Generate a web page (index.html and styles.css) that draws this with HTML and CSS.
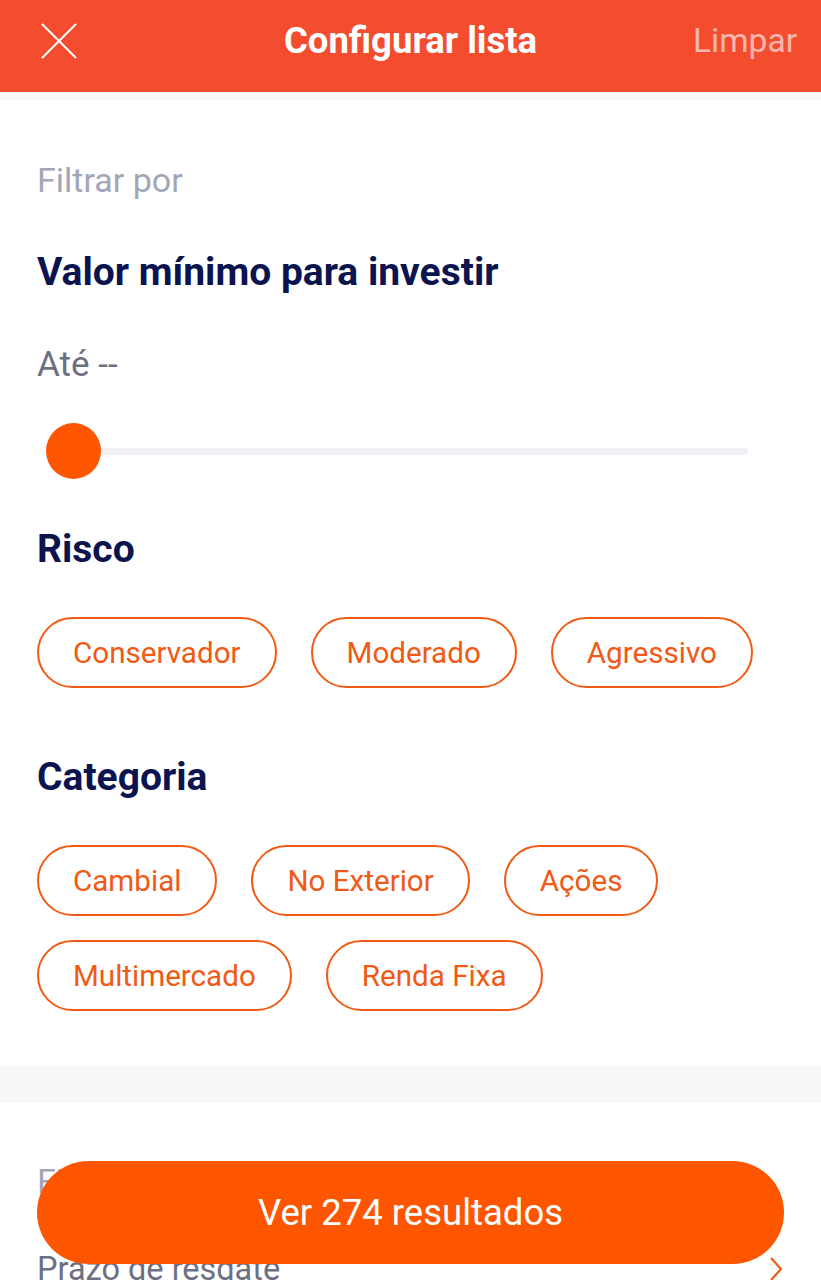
FILE: index.html
```html
<!DOCTYPE html>
<html lang="pt-BR">
<head>
<meta charset="utf-8">
<title>Configurar lista</title>
<link rel="stylesheet" href="styles.css">
</head>
<body>
<header class="topbar">
  <button class="close" aria-label="Fechar">
    <svg width="36" height="36" viewBox="0 0 36 36"><path d="M1 1 L35 35 M35 1 L1 35" stroke="#fff" stroke-width="2" fill="none"/></svg>
  </button>
  <h1 class="title">Configurar lista</h1>
  <span class="clear">Limpar</span>
</header>
<div class="strip"></div>
<main class="content">
  <section class="section">
    <p class="label">Filtrar por</p>
    <h2 class="heading heading-first">Valor mínimo para investir</h2>
    <p class="value">Até --</p>
    <div class="slider">
      <div class="track"></div>
      <div class="thumb"></div>
    </div>
    <h2 class="heading heading-risk">Risco</h2>
    <div class="chips">
      <span class="chip">Conservador</span>
      <span class="chip">Moderado</span>
      <span class="chip">Agressivo</span>
    </div>
    <h2 class="heading heading-cat">Categoria</h2>
    <div class="chips">
      <span class="chip">Cambial</span>
      <span class="chip">No Exterior</span>
      <span class="chip">Ações</span>
      <span class="chip">Multimercado</span>
      <span class="chip">Renda Fixa</span>
    </div>
  </section>
  <div class="band"></div>
  <section class="section section-second">
    <p class="label">Filtrar por</p>
    <div class="row">
      <span class="row-text">Prazo de resgate</span>
      <svg class="chev" width="12" height="24" viewBox="0 0 12 24"><path d="M1 1 L11 12 L1 23" stroke="#f05a14" stroke-width="2.2" fill="none"/></svg>
    </div>
  </section>
</main>
<button class="cta">Ver 274 resultados</button>
</body>
</html>
```
FILE: styles.css
```css
* { box-sizing: border-box; }
html, body { margin: 0; padding: 0; }
body {
  font-family: Roboto, "Liberation Sans", Arial, sans-serif;
  background: #fff;
  width: 821px;
  height: 1280px;
  overflow: hidden;
}
.topbar {
  height: 92px;
  background: #f34c2f;
  display: grid;
  grid-template-columns: 1fr auto 1fr;
  align-items: center;
  padding: 0 24px 10px 24px;
}
.close {
  background: none;
  border: 0;
  padding: 0;
  width: 36px;
  height: 36px;
  margin-left: 17px;
  display: flex;
  justify-self: start;
}
.title {
  margin: 0;
  font-size: 36.5px;
  font-weight: 700;
  color: #fff;
  line-height: 40px;
}
.clear {
  justify-self: end;
  font-size: 33.5px;
  color: rgba(255, 255, 255, 0.6);
  line-height: 40px;
}
.strip {
  height: 8px;
  background: #f6f7f6;
}
.content { padding: 0; }
.section { padding: 0 37px; }
.label {
  margin: 60px 0 0;
  font-size: 34px;
  line-height: 40px;
  color: #a2a6b8;
}
.heading {
  margin: 0;
  font-size: 39px;
  line-height: 44px;
  font-weight: 700;
  color: #0c1450;
}
.heading-first { margin-top: 50px; }
.value {
  margin: 51px 0 0;
  font-size: 35px;
  line-height: 40px;
  color: #6d7082;
}
.slider {
  position: relative;
  margin: 38px 0 0 9px;
  width: 702px;
  height: 56px;
  display: flex;
  align-items: center;
}
.track {
  width: 100%;
  height: 7px;
  border-radius: 4px;
  background: #f1f1f6;
}
.thumb {
  position: absolute;
  left: 0;
  top: 0;
  width: 55px;
  height: 56px;
  border-radius: 50%;
  background: #fe5500;
}
.heading-risk { margin-top: 48px; }
.heading-cat { margin-top: 67px; }
.chips {
  margin-top: 46px;
  display: flex;
  flex-wrap: wrap;
  column-gap: 34px;
  row-gap: 24px;
}
.chip {
  height: 71px;
  padding: 0 34px;
  border: 2px solid #f05a14;
  border-radius: 36px;
  display: flex;
  align-items: center;
  font-size: 29.6px;
  color: #f05a14;
}
.band {
  margin-top: 55px;
  height: 37px;
  background: #f8f8f8;
}
.section-second .label { margin-top: 58px; }
.row {
  margin-top: 48px;
  display: flex;
  align-items: center;
  justify-content: space-between;
  padding-right: 2px;
}
.row-text {
  font-size: 32.5px;
  line-height: 40px;
  color: #6d7082;
}
.cta {
  position: fixed;
  left: 37px;
  right: 37px;
  bottom: 16px;
  height: 103px;
  border: 0;
  border-radius: 52px;
  background: #fe5500;
  color: #fff;
  font-family: Roboto, "Liberation Sans", Arial, sans-serif;
  font-size: 36.5px;
}
```
